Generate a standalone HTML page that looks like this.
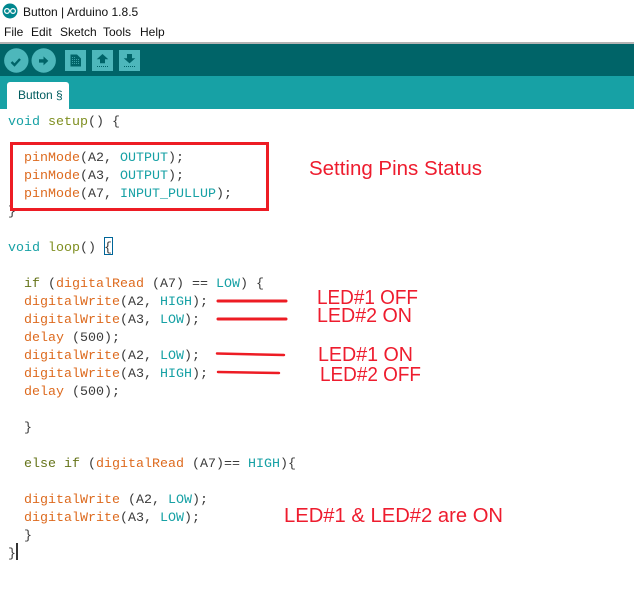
<!DOCTYPE html>
<html><head><meta charset="utf-8"><style>
html,body{margin:0;padding:0;background:#fff}
#p{position:relative;width:634px;height:590px;overflow:hidden;background:#fff;font-family:"Liberation Sans",sans-serif}
.a{position:absolute}
.m{position:absolute;top:24px;font-size:12px;line-height:16px;color:#111}
.l{position:absolute;left:8px;white-space:pre;font:13.33px/18px "Liberation Mono",monospace;color:#3a3a3a;height:18px}
.k{color:#17a1a5}.f{color:#dd6a1e}.t{color:#7f8f20}.v{color:#66741a}.c{color:#17a1a5}
</style></head><body><div id="p">
<svg class="a" style="left:2px;top:3px" width="16" height="16" viewBox="0 0 16 16"><circle cx="8" cy="8" r="7.5" fill="#00878f"/><circle cx="5" cy="8" r="2.4" fill="none" stroke="#fff" stroke-width="1.2"/><circle cx="11" cy="8" r="2.4" fill="none" stroke="#fff" stroke-width="1.2"/></svg>
<div class="a" style="left:23px;top:4px;font-size:12px;line-height:16px;color:#111">Button | Arduino 1.8.5</div>
<div class="m" style="left:4px">File</div>
<div class="m" style="left:31px">Edit</div>
<div class="m" style="left:60px">Sketch</div>
<div class="m" style="left:103px">Tools</div>
<div class="m" style="left:140px">Help</div>
<div class="a" style="left:0;top:42px;width:634px;height:2px;background:#b4b4b4"></div>
<div class="a" style="left:0;top:44px;width:634px;height:32px;background:#006468"></div>
<div class="a" style="left:0;top:76px;width:634px;height:33px;background:#17a1a5"></div>
<svg class="a" style="left:0;top:44px" width="150" height="32" viewBox="0 0 150 32">
<circle cx="16.300" cy="16.500" r="12.200" fill="#4db7bb"/>
<path d="M11.500 18l3 3 5.500-6" fill="none" stroke="#006468" stroke-width="2.400"/>
<circle cx="43.700" cy="16.500" r="12.200" fill="#4db7bb"/>
<path d="M39 15.200h4.500v-2.800l4.800 4.500-4.800 4.500v-2.800H39z" fill="#006468"/>
<rect x="65" y="6" width="21" height="21" fill="#4db7bb"/>
<path d="M70.500 10.500h6.500l4 4v8h-10.500z" fill="#006468"/>
<path d="M72 13.500h3.500M72 15.500h7.500M72 17.500h7.500M72 19.500h7.500" stroke="#4db7bb" stroke-width=".8" stroke-dasharray="1 1"/>
<rect x="92" y="6" width="21" height="21" fill="#4db7bb"/>
<path d="M102.500 10l5.800 5.200h-3.300v4h-5v-4h-3.300z" fill="#006468"/>
<path d="M97 22.500h11" stroke="#006468" stroke-dasharray="1 1"/>
<rect x="119" y="6" width="21" height="21" fill="#4db7bb"/>
<path d="M127 10h5v4.200h3.300l-5.800 5.200-5.800-5.200h3.300z" fill="#006468"/>
<path d="M124 22.500h11" stroke="#006468" stroke-dasharray="1 1"/>
</svg>
<div class="a" style="left:7px;top:82px;width:62px;height:27px;background:#fff;border-radius:3px 3px 0 0"></div>
<div class="a" style="left:18px;top:87px;font-size:12px;line-height:16px;color:#005c5f">Button §</div>

<div class="l" style="top:114px"><span class="k">void</span> <span class="t">setup</span>() {</div>
<div class="l" style="top:150px">  <span class="f">pinMode</span>(A2, <span class="c">OUTPUT</span>);</div>
<div class="l" style="top:168px">  <span class="f">pinMode</span>(A3, <span class="c">OUTPUT</span>);</div>
<div class="l" style="top:186px">  <span class="f">pinMode</span>(A7, <span class="c">INPUT_PULLUP</span>);</div>
<div class="l" style="top:204px">}</div>
<div class="l" style="top:240px"><span class="k">void</span> <span class="t">loop</span>() {</div>
<div class="a" style="left:104px;top:237px;width:7px;height:16px;border:1px solid #006699"></div>
<div class="l" style="top:276px">  <span class="v">if</span> (<span class="f">digitalRead</span> (A7) == <span class="c">LOW</span>) {</div>
<div class="l" style="top:294px">  <span class="f">digitalWrite</span>(A2, <span class="c">HIGH</span>);</div>
<div class="l" style="top:312px">  <span class="f">digitalWrite</span>(A3, <span class="c">LOW</span>);</div>
<div class="l" style="top:330px">  <span class="f">delay</span> (500);</div>
<div class="l" style="top:348px">  <span class="f">digitalWrite</span>(A2, <span class="c">LOW</span>);</div>
<div class="l" style="top:366px">  <span class="f">digitalWrite</span>(A3, <span class="c">HIGH</span>);</div>
<div class="l" style="top:384px">  <span class="f">delay</span> (500);</div>
<div class="l" style="top:420px">  }</div>
<div class="l" style="top:456px">  <span class="v">else</span> <span class="v">if</span> (<span class="f">digitalRead</span> (A7)== <span class="c">HIGH</span>){</div>
<div class="l" style="top:492px">  <span class="f">digitalWrite</span> (A2, <span class="c">LOW</span>);</div>
<div class="l" style="top:510px">  <span class="f">digitalWrite</span>(A3, <span class="c">LOW</span>);</div>
<div class="l" style="top:528px">  }</div>
<div class="l" style="top:546px">}</div>
<div class="a" style="left:16px;top:543px;width:2px;height:17px;background:#333"></div>

<svg class="a" style="left:0;top:0" width="634" height="590" viewBox="0 0 634 590" font-family="Liberation Sans, sans-serif" fill="#ee1c2e" font-size="20">
<rect x="11.500" y="143.500" width="256" height="66" fill="none" stroke="#ed1c24" stroke-width="3"/>
<path d="M218 301h68M218 319h68" stroke="#ed1c24" stroke-width="3" stroke-linecap="round"/>
<path d="M217 353.500l67 1.500M218 372l61 1" stroke="#ed1c24" stroke-width="2.500" stroke-linecap="round"/>
<text x="309" y="175" textLength="173" lengthAdjust="spacingAndGlyphs">Setting Pins Status</text>
<text x="317" y="304" textLength="101" lengthAdjust="spacingAndGlyphs">LED#1 OFF</text>
<text x="317" y="322" textLength="95" lengthAdjust="spacingAndGlyphs">LED#2 ON</text>
<text x="318" y="361" textLength="95" lengthAdjust="spacingAndGlyphs">LED#1 ON</text>
<text x="320" y="381" textLength="101" lengthAdjust="spacingAndGlyphs">LED#2 OFF</text>
<text x="284" y="522" textLength="219" lengthAdjust="spacingAndGlyphs">LED#1 &amp; LED#2 are ON</text>
</svg>
</div></body></html>
